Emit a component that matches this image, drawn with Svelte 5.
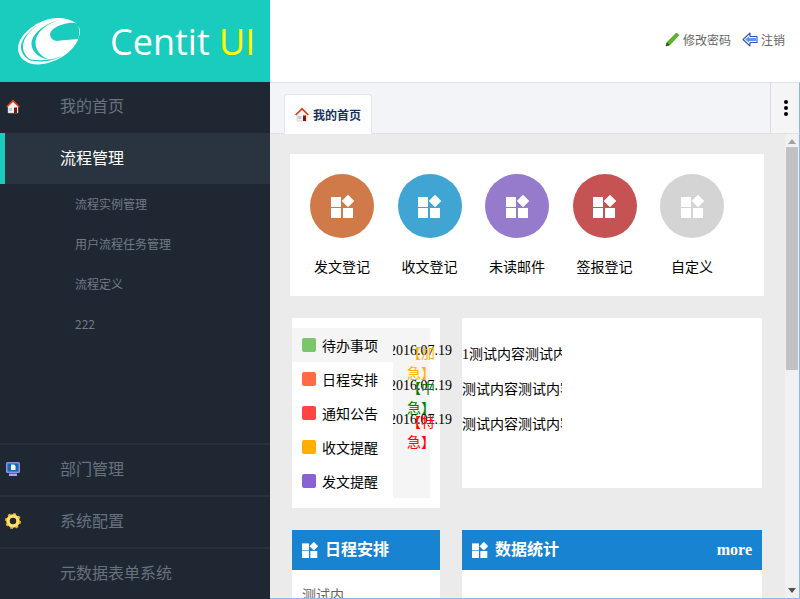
<script>
	const shortcuts = [
		{ label: '发文登记', color: '#cf7a48' },
		{ label: '收文登记', color: '#41a5d4' },
		{ label: '未读邮件', color: '#967bcd' },
		{ label: '签报登记', color: '#c55353' },
		{ label: '自定义', color: '#d4d4d4' }
	];
	const reminders = [
		{ label: '待办事项', color: '#7bc56a', active: true },
		{ label: '日程安排', color: '#ff6b43' },
		{ label: '通知公告', color: '#ff4444' },
		{ label: '收文提醒', color: '#ffad00' },
		{ label: '发文提醒', color: '#8a63d2' }
	];
	const notices = [
		{ tag: '【加急】', color: '#ffb000', text: '1测试内容测试内容' },
		{ tag: '【中急】', color: '#008000', text: '测试内容测试内容测试' },
		{ tag: '【特急】', color: '#ff0000', text: '测试内容测试内容测试' }
	];
	const subItems = ['流程实例管理', '用户流程任务管理', '流程定义', '222'];
</script>

{#snippet grid(size)}
	<svg class="grid" width={size} height={size} viewBox="0 0 23 23" fill="currentColor">
		<rect x="0" y="2" width="10" height="10" />
		<rect x="0" y="13" width="10" height="10" />
		<rect x="12" y="13" width="10" height="10" />
		<path d="M17 0 23 6 17 12 11 6Z" stroke="currentColor" stroke-width=".5" stroke-linejoin="round" />
	</svg>
{/snippet}

{#snippet house()}
	<svg width="16" height="16" viewBox="0 0 16 16">
		<path d="M3 8v7h10V8L8 3Z" fill="#f4f2ee" stroke="#b9b4aa" stroke-width=".5" />
		<path d="M1 8.500 8 1.500l7 7-1.200 1L8 4 2.200 9.500Z" fill="#d9421c" />
		<rect x="9" y="9.500" width="3" height="5.500" fill="#8c0f0a" />
		<rect x="4.200" y="10" width="3" height="3" fill="#a9cdea" />
	</svg>
{/snippet}

<div class="page">
	<aside class="side">
		<div class="brand">
			<svg class="logo" width="64" height="50" viewBox="17 16 64 50">
				<path d="M80 31C79 20 62 15 46 20 30 25 18 38 18 48 18 59 28 65 39 64.500 57 63 79 50 80 31Z" fill="#fff" />
				<path d="M50 34C51 29 58 25.500 64 24 70 22.500 76 22 78 25 79.500 28 79.500 33 78.500 39L60 40.500C55 42 50 39 50 34Z" fill="#1accbd" />
				<path d="M62 19.500C47 23 35.500 32 35.500 43 35.500 51 42 58 51 60 40 59 31.500 52 31.500 44 31.500 33 46 22.500 62 19.500Z" fill="#1accbd" />
				<path d="M56 18.500C40 21 24 33 23 46 22.500 54 29 61 38 62.500 31 62 21 57 21 47 21 36 38 21 56 18.500Z" fill="#1accbd" />
				<path d="M26 58.500C36 63.500 52 62 62 56 52 60.500 38 61.500 26 58.500Z" fill="#1accbd" />
			</svg>
			<div class="brand-name">Centit <span>UI</span></div>
		</div>
		<nav class="menu">
			<div class="menu-item first">
				<span class="menu-icon">{@render house()}</span>
				我的首页
			</div>
			<div class="menu-item open">流程管理</div>
			<ul class="sub">
				{#each subItems as item}
					<li>{item}</li>
				{/each}
			</ul>
			<div class="menu-item">
				<span class="menu-icon">
					<svg width="16" height="16" viewBox="0 0 16 16">
						<rect x="1" y="1" width="14" height="11" rx="1.500" fill="#8f8fe8" />
						<rect x="2.500" y="2.500" width="11" height="8" fill="#1268b8" />
						<path d="M6 3.500h3l1.500 1.500v4H6Z" fill="#fff" />
						<rect x="4" y="12.500" width="8" height="2.500" fill="#a9a6ee" />
					</svg>
				</span>
				部门管理
			</div>
			<div class="menu-item">
				<span class="menu-icon">
					<svg width="16" height="16" viewBox="0 0 16 16">
						<circle cx="8" cy="8" r="5" fill="none" stroke="#ffe27a" stroke-width="3.500" />
						<circle cx="8" cy="8" r="7" fill="none" stroke="#f4b820" stroke-width="2" stroke-dasharray="2.800 2.700" />
						<circle cx="8" cy="8" r="2.500" fill="#2b2417" />
					</svg>
				</span>
				系统配置
			</div>
			<div class="menu-item">元数据表单系统</div>
		</nav>
	</aside>

	<main class="main">
		<header class="top">
			<span class="top-link">
				<svg width="15" height="15" viewBox="0 0 15 15">
					<path d="M1 14 2 10.500 11.500 1 13.800 3.300 4.500 13Z" fill="#5cbc1e" stroke="#2f7a10" stroke-width=".7" />
					<path d="M1 14 2 10.500 4.500 13Z" fill="#1f4f0a" />
				</svg>
				修改密码
			</span>
			<span class="top-link">
				<svg width="16" height="15" viewBox="0 0 16 15">
					<path d="M1 7.500 8 1V4.500h7v6H8V14Z" fill="#fff" stroke="#3653b8" stroke-width="1.100" stroke-linejoin="round" />
					<path d="M3 7.500 7 4.500V6h7v3H7v1.500Z" fill="#4f9fec" />
				</svg>
				注销
			</span>
		</header>

		<div class="tabbar">
			<div class="tab">
				{@render house()}
				我的首页
			</div>
			<button class="more-btn" aria-label="more">
				<i></i><i></i><i></i>
			</button>
		</div>

		<div class="body">
			<div class="content">
				<section class="shortcuts">
					{#each shortcuts as s}
						<div class="shortcut">
							<div class="circle" style="background:{s.color}">{@render grid(23)}</div>
							<div class="shortcut-label">{s.label}</div>
						</div>
					{/each}
				</section>

				<section class="row">
					<div class="reminder">
						<div class="reminder-inner">
							<ul class="reminder-list">
								{#each reminders as r}
									<li class:active={r.active}>
										<span class="dot" style="background:{r.color}"></span>
										{r.label}
									</li>
								{/each}
							</ul>
							<div class="dates">
								{#each notices as n}
									<div class="date-row">
										2016.07.19
										<span class="tag" style="color:{n.color}">{n.tag}</span>
									</div>
								{/each}
							</div>
						</div>
					</div>
					<div class="notice">
						<div class="notice-text">
							{#each notices as n}
								<div class="notice-line">{n.text}</div>
							{/each}
						</div>
					</div>
				</section>

				<section class="row">
					<div class="card small">
						<div class="card-head">{@render grid(16)}<span>日程安排</span></div>
						<div class="card-body">测试内</div>
					</div>
					<div class="card wide">
						<div class="card-head">{@render grid(16)}<span>数据统计</span><b>more</b></div>
					</div>
				</section>
			</div>

			<div class="scrollbar">
				<span class="arrow up"></span>
				<span class="thumb"></span>
				<span class="arrow down"></span>
			</div>
		</div>
	</main>
</div>

<style>
	:global(body) {
		margin: 0;
		background: #fff;
	}

	.page {
		display: flex;
		width: 800px;
		height: 599px;
		overflow: hidden;
		font-family: "Liberation Serif", "Noto Sans CJK SC", serif;
		font-size: 14px;
		color: #000;
	}

	.side {
		width: 270px;
		flex: none;
		display: flex;
		flex-direction: column;
		background: #1f2733;
	}

	.brand {
		height: 82px;
		flex: none;
		display: flex;
		align-items: center;
		background: #1accbd;
		padding-left: 17px;
		box-sizing: border-box;
	}

	.brand-name {
		margin-left: 29px;
		font-family: "Open Sans", sans-serif;
		font-weight: 400;
		font-size: 36px;
		color: #fff;
		white-space: nowrap;
	}

	.brand-name span {
		color: #ffff00;
	}

	.menu {
		flex: 1;
		display: flex;
		flex-direction: column;
		font-family: "Noto Sans CJK SC", sans-serif;
	}

	.menu-item {
		position: relative;
		height: 50px;
		line-height: 46px;
		flex: none;
		padding-left: 60px;
		font-size: 16px;
		color: #68727e;
		border-top: 2px solid #28323c;
	}

	.menu-item.first {
		border-top: 0;
		height: 51px;
	}

	.menu-item.open {
		border-top: 0;
		height: 51px;
		line-height: 49px;
		background: #2a3440;
		color: #fff;
		box-shadow: inset 5px 0 0 #1accbd;
	}

	.menu-icon {
		position: absolute;
		left: 5px;
		top: 16px;
		width: 16px;
		height: 16px;
	}

	.menu-icon svg {
		display: block;
	}

	.sub {
		list-style: none;
		margin: 0;
		padding: 0 0 0 75px;
		height: 259px;
		flex: none;
		font-size: 12px;
		color: #717b87;
	}

	.sub li {
		height: 40px;
		line-height: 40px;
	}

	.main {
		flex: 1;
		min-width: 0;
		display: flex;
		flex-direction: column;
	}

	.top {
		height: 82px;
		flex: none;
		box-sizing: border-box;
		display: flex;
		align-items: center;
		justify-content: flex-end;
		gap: 11px;
		padding: 0 15px 3px 0;
		font-family: "Noto Sans CJK SC", sans-serif;
		font-size: 12px;
		color: #666;
	}

	.top-link {
		display: flex;
		align-items: center;
		gap: 3px;
	}

	.tabbar {
		height: 52px;
		flex: none;
		display: flex;
		justify-content: space-between;
		box-sizing: border-box;
		padding-left: 14px;
		background: #f2f4f8;
		border-top: 1px solid #dde1ea;
		border-bottom: 1px solid #dde1ea;
		border-right: 1px solid #8fb6e6;
	}

	.tab {
		align-self: flex-end;
		height: 40px;
		margin-bottom: -1px;
		box-sizing: border-box;
		display: flex;
		align-items: center;
		gap: 3px;
		padding: 0 9px 0 9px;
		width: 88px;
		background: #fff;
		border: 1px solid #e3e6ee;
		border-bottom-color: #fff;
		border-radius: 4px 4px 0 0;
		font-family: "Noto Sans CJK SC", sans-serif;
		font-size: 12px;
		font-weight: 700;
		color: #17305f;
	}

	.more-btn {
		width: 29px;
		padding: 0 0 0 1px;
		display: flex;
		flex-direction: column;
		align-items: center;
		justify-content: center;
		gap: 2px;
		background: #f5f5f5;
		border: 0;
		border-left: 1px solid #d8dbe2;
	}

	.more-btn i {
		width: 4px;
		height: 4px;
		border-radius: 50%;
		background: #000;
	}

	.body {
		flex: 1;
		min-height: 0;
		display: flex;
		background: #ebebeb;
		border-right: 1px solid #8fb6e6;
		border-bottom: 1px solid #8fb6e6;
	}

	.content {
		flex: 1;
		min-width: 0;
		overflow: hidden;
		box-sizing: border-box;
		padding: 20px 21px 0 20px;
	}

	.shortcuts {
		height: 142px;
		box-sizing: border-box;
		display: flex;
		padding: 20px 0 0 20px;
		background: #fff;
	}

	.shortcut {
		width: 87.500px;
		flex: none;
	}

	.circle {
		width: 64px;
		height: 64px;
		border-radius: 50%;
		display: flex;
		align-items: center;
		justify-content: center;
		color: #fff;
	}

	.shortcut-label {
		width: 64px;
		margin-top: 18px;
		line-height: 20px;
		text-align: center;
		white-space: nowrap;
		font-family: "Noto Sans CJK SC", sans-serif;
	}

	.row {
		display: flex;
		align-items: flex-start;
		gap: 22px;
		margin: 22px 0 0 2px;
	}

	.reminder {
		width: 148px;
		height: 190px;
		flex: none;
		box-sizing: border-box;
		padding: 10px 10px 10px 0;
		background: #fff;
	}

	.reminder-inner {
		display: flex;
		height: 170px;
		background: #f5f5f5;
	}

	.reminder-list {
		position: relative;
		z-index: 1;
		width: 101px;
		flex: none;
		list-style: none;
		margin: 0;
		padding: 0;
		background: #fff;
		font-family: "Noto Sans CJK SC", sans-serif;
	}

	.reminder-list li {
		height: 34px;
		display: flex;
		align-items: center;
		gap: 6px;
		padding-left: 10px;
		white-space: nowrap;
	}

	.reminder-list li.active {
		background: #f5f5f5;
	}

	.dot {
		width: 14px;
		height: 14px;
		border-radius: 2px;
		flex: none;
	}

	.dates {
		margin-left: -4px;
		padding-top: 13px;
		white-space: nowrap;
	}

	.date-row {
		position: relative;
		height: 34.500px;
		line-height: 20px;
	}

	.tag {
		position: absolute;
		left: 18px;
		top: 3px;
		width: 30px;
		white-space: normal;
		font-family: "Liberation Serif", "Noto Sans CJK SC", serif;
	}

	.notice {
		width: 300px;
		height: 170px;
		flex: none;
		box-sizing: border-box;
		padding-top: 19px;
		background: #fff;
	}

	.notice-text {
		width: 100px;
		overflow: hidden;
		white-space: nowrap;
	}

	.notice-line {
		height: 35px;
		line-height: 36px;
	}

	.card {
		flex: none;
		background: #fff;
	}

	.card.small {
		width: 148px;
	}

	.card.wide {
		width: 300px;
		height: 69px;
	}

	.card-head {
		height: 40px;
		display: flex;
		align-items: center;
		gap: 7px;
		padding: 0 10px;
		background: #1883d1;
		color: #fff;
		font-family: "Noto Sans CJK SC", sans-serif;
		font-size: 16px;
		font-weight: 700;
	}

	.card-head span {
		margin-bottom: 5px;
	}

	.card-head b {
		margin-left: auto;
		font-family: "Liberation Serif", serif;
		font-size: 16px;
	}

	.card-body {
		padding: 14px 10px;
		line-height: 20px;
		color: #666;
		font-family: "Noto Sans CJK SC", sans-serif;
	}

	.scrollbar {
		width: 14px;
		flex: none;
		display: flex;
		flex-direction: column;
		align-items: center;
		background: #f1f1f1;
	}

	.thumb {
		width: 12px;
		height: 223px;
		margin-top: 3px;
		background: #c1c1c1;
	}

	.arrow {
		width: 0;
		height: 0;
		border-left: 4px solid transparent;
		border-right: 4px solid transparent;
	}

	.arrow.up {
		margin-top: 5px;
		border-bottom: 5px solid #a3a3a3;
	}

	.arrow.down {
		margin-top: auto;
		margin-bottom: 5px;
		border-top: 5px solid #505050;
	}
</style>
